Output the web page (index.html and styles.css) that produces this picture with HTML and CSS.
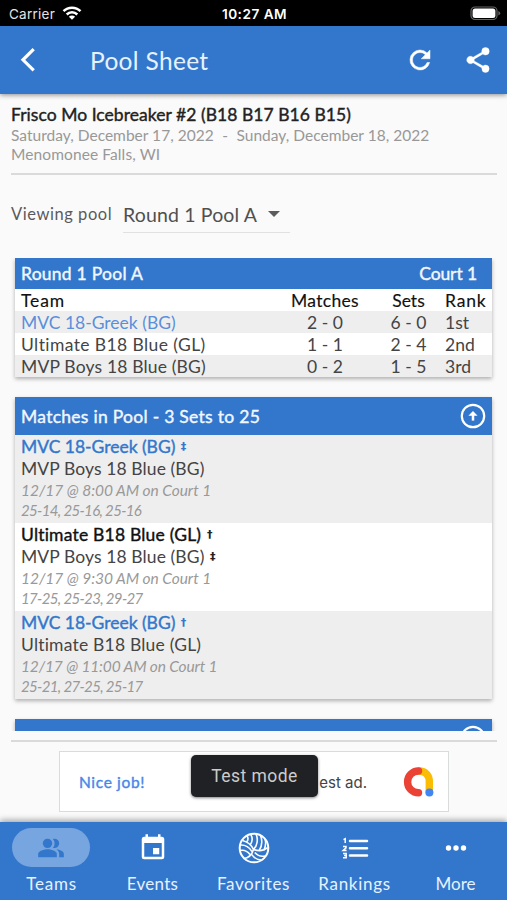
FILE: index.html
```html
<!DOCTYPE html>
<html lang="en">
<head>
<meta charset="utf-8">
<title>Pool Sheet</title>
<link rel="stylesheet" href="styles.css">
</head>
<body>
<div class="app">
  <div class="status">
    <div class="carrier"><span>Carrier</span>
      <svg width="20" height="15" viewBox="0 0 20 15" fill="none" stroke="#fff" stroke-width="2.5"><path d="M1.5 5.2a12 12 0 0 1 17 0M4.7 8.5a7.5 7.5 0 0 1 10.6 0"/><path d="M10 13.8 6.9 10.7a4.4 4.4 0 0 1 6.2 0z" fill="#fff" stroke="none"/></svg>
    </div>
    <div class="time">10:27 AM</div>
    <svg class="battery" width="31" height="15" viewBox="0 0 31 15"><rect x="1" y="1" width="26" height="12.5" rx="4" fill="none" stroke="#666" stroke-width="1.2"/><rect x="2.6" y="2.6" width="22.8" height="9.3" rx="2.5" fill="#fff"/><path d="M28.4 5v4.5q1.8-.8 1.8-2.2T28.4 5" fill="#666"/></svg>
  </div>
  <header class="bar">
    <svg class="back" width="16" height="24" viewBox="0 0 16 24" fill="none" stroke="#fff" stroke-width="3.2"><path d="M13.7 1.2 3 11.8l10.7 10.6"/></svg>
    <h1>Pool Sheet</h1>
    <svg class="reload" width="30" height="30" viewBox="0 0 24 24" fill="#fff" stroke="#fff" stroke-width=".4"><path d="M17.65 6.35A7.96 7.96 0 0 0 12 4a8 8 0 1 0 7.73 10h-2.08A6 6 0 1 1 12 6c1.66 0 3.14.69 4.22 1.78L13 11h7V4z"/></svg>
    <svg class="share" width="30" height="30" viewBox="0 0 24 24" fill="#fff" stroke="#fff" stroke-width=".3"><path d="M18 16.08c-.76 0-1.44.3-1.96.77L8.91 12.7c.05-.23.09-.46.09-.7s-.04-.47-.09-.7l7.05-4.11c.54.5 1.25.81 2.04.81a3 3 0 1 0-3-3c0 .24.04.47.09.7L8.04 9.81A3 3 0 1 0 6 15c.79 0 1.5-.31 2.04-.81l7.12 4.16c-.05.21-.08.43-.08.65a2.92 2.92 0 1 0 2.92-2.92z"/></svg>
  </header>
  <main>
    <section class="event">
      <h2>Frisco Mo Icebreaker #2 (B18 B17 B16 B15)</h2>
      <p class="dates"><span>Saturday, December 17, 2022</span><span>-</span><span>Sunday, December 18, 2022</span></p>
      <p class="place">Menomonee Falls, WI</p>
    </section>
    <div class="picker"><span class="picker-label">Viewing pool</span>
      <div class="select"><span>Round 1 Pool A</span><i class="caret"></i></div>
    </div>
    <div class="list">
      <section class="card">
        <div class="card-head pool"><span>Round 1 Pool A</span><span class="court">Court 1</span></div>
        <div class="row head"><span class="team">Team</span><span class="matches">Matches</span><span>Sets</span><span class="rank">Rank</span></div>
        <div class="row odd"><span class="link team1">MVC 18-Greek (BG)</span><span>2 - 0</span><span>6 - 0</span><span>1st</span></div>
        <div class="row"><span class="team2">Ultimate B18 Blue (GL)</span><span>1 - 1</span><span>2 - 4</span><span>2nd</span></div>
        <div class="row odd"><span class="team3">MVP Boys 18 Blue (BG)</span><span>0 - 2</span><span>1 - 5</span><span>3rd</span></div>
      </section>
      <section class="card">
        <div class="card-head games"><span>Matches in Pool - 3 Sets to 25</span>
          <svg width="26" height="26" viewBox="0 0 26 26" fill="none" stroke="#fff" stroke-width="2.2"><circle cx="13" cy="13" r="11.2"/><path d="M13 17.6V10" stroke-width="2.5"/><path d="M8.4 12.8 13 8l4.6 4.8z" fill="#fff" stroke="none"/></svg>
        </div>
        <div class="match odd">
          <p class="win link team1">MVC 18-Greek (BG) <b>‡</b></p>
          <p class="team3">MVP Boys 18 Blue (BG)</p>
          <p class="info">12/17 @ 8:00 AM on Court 1</p>
          <p class="info score">25-14, 25-16, 25-16</p>
        </div>
        <div class="match">
          <p class="win team2">Ultimate B18 Blue (GL) <b>†</b></p>
          <p class="team3">MVP Boys 18 Blue (BG) <b>‡</b></p>
          <p class="info">12/17 @ 9:30 AM on Court 1</p>
          <p class="info score">17-25, 25-23, 29-27</p>
        </div>
        <div class="match odd">
          <p class="win link team1">MVC 18-Greek (BG) <b>†</b></p>
          <p class="team2">Ultimate B18 Blue (GL)</p>
          <p class="info late">12/17 @ 11:00 AM on Court 1</p>
          <p class="info score">25-21, 27-25, 25-17</p>
        </div>
      </section>
      <section class="card next">
        <div class="card-head games"><span></span>
          <svg width="26" height="26" viewBox="0 0 26 26" fill="none" stroke="#fff" stroke-width="2.2"><circle cx="13" cy="13" r="11.2"/></svg>
        </div>
      </section>
    </div>
  </main>
  <aside class="ad-area">
    <div class="ad">
      <span class="nice">Nice job!</span><span class="ad-text">est ad.</span>
      <svg width="32" height="32" viewBox="0 0 32 32" fill="none" stroke-linecap="round" stroke-width="7.4"><path d="M16 5c6.5 0 10.3 4.6 10.3 10.5V26" stroke="#fbbc04"/><path d="M15.5 5a10.8 10.8 0 1 0 0 21.8" stroke="#ea4335"/><circle cx="26.4" cy="26.6" r="4" fill="#4285f4"/></svg>
      <div class="test">Test mode</div>
    </div>
  </aside>
  <nav>
    <div class="tab"><div class="icon active"><svg width="28" height="28" viewBox="0 0 24 24" fill="#3377cc"><path d="M16.67 13.13C18.04 14.06 19 15.32 19 17v3h4v-3c0-2.18-3.57-3.47-6.33-3.87zM15 12a4 4 0 0 0 0-8c-.47 0-.91.1-1.33.24a5.98 5.98 0 0 1 0 7.52c.42.14.86.24 1.33.24z"/><circle cx="9" cy="8" r="4"/><path d="M9 13c-2.67 0-8 1.34-8 4v3h16v-3c0-2.66-5.33-4-8-4z"/></svg></div><span class="t-teams">Teams</span></div>
    <div class="tab"><div class="icon"><svg width="30" height="30" viewBox="0 0 24 24" fill="#fff"><path d="M17 12h-5v5h5v-5zM16 1v2H8V1H6v2H5a2 2 0 0 0-2 2v14a2 2 0 0 0 2 2h14a2 2 0 0 0 2-2V5a2 2 0 0 0-2-2h-1V1h-2zm3 18H5V8h14v11z"/></svg></div><span class="t-events">Events</span></div>
    <div class="tab"><div class="icon"><svg width="32" height="32" viewBox="0 0 32 32" fill="none" stroke="#fff" stroke-width="1.6"><circle cx="16" cy="16" r="14.3" stroke-width="2"/><path d="M15.5 17.5C13.5 13 9.5 9.8 4.5 8.5M15.5 17.5C19.5 13.5 20.3 7 18 2M15.5 17.5C21 19.5 26 18.8 29.7 15.5"/><path d="M12.3 12.8C14.6 9.5 14.6 5.5 12.6 2.2M8.6 10C10.3 8 10.5 6 9 3.8M2 13C7 12.6 11 14.8 13.8 19.3M2 18.5C6 17.7 9.8 19.6 12 22.5M22.5 3.5C24.7 9 23.8 14.5 21 18.9M27 7C28.3 11 27.5 15 25.8 18.5M15.5 17.5C14 22.5 10.3 26.2 5.5 26.5M16.8 20.5C20 24 24 25 27.8 23.7M13.8 22.6C16.5 26.3 19.5 28 23.5 28"/></svg></div><span class="t-fav">Favorites</span></div>
    <div class="tab"><div class="icon"><svg width="28" height="28" viewBox="0 0 28 28" fill="none" stroke="#fff"><path d="M9 7h17M9 14.3h17M9 21.6h17" stroke-width="2.5" stroke-linecap="round"/><path d="M2.5 5.6 4.2 4.8v4.2M2 12.4h3v1.4L2.2 16.4H5.6M2 19.4h3.2v4.4H2M3 21.6h2" stroke-width="1.5"/></svg></div><span class="t-rank">Rankings</span></div>
    <div class="tab"><div class="icon"><svg width="22" height="8" viewBox="0 0 22 8" fill="#fff"><circle cx="3.5" cy="4" r="2.7"/><circle cx="11" cy="4" r="2.7"/><circle cx="18.5" cy="4" r="2.7"/></svg></div><span class="t-more">More</span></div>
  </nav>
</div>
</body>
</html>
```
FILE: styles.css
```css
* { box-sizing: border-box; }
body { margin: 0; background: #fafafa; color: #444; font-family: Lato, "Liberation Sans", sans-serif; font-size: 17.5px; }
h1, h2, p { margin: 0; font-weight: 400; }
svg { display: block; flex: none; }
.app { width: 507px; height: 900px; display: flex; flex-direction: column; overflow: hidden; }

.status { height: 26px; flex: none; background: #000; color: #fff; display: grid; grid-template-columns: 1fr auto 1fr; align-items: center; padding: 2px 6px 0 9px; font-family: Inter, sans-serif; font-size: 13.5px; }
.carrier { display: flex; align-items: center; gap: 7px; color: #e4e4e4; letter-spacing: .25px; }
.carrier svg { margin-top: -1px; }
.time { font-size: 13.6px; font-weight: 600; letter-spacing: .5px; margin-left: -1px; }
.battery { justify-self: end; margin-top: -2px; }

.bar { height: 68px; flex: none; background: #3377cc; color: #e6f2ff; display: flex; align-items: center; padding: 0 14px 0 20px; position: relative; box-shadow: 0 1px 5px rgba(0,0,0,.45); }
.bar h1 { font-size: 24.5px; letter-spacing: .32px; margin-left: 54px; flex: 1; line-height: 30px; padding-top: 1px; }
.share { margin-left: 28px; }

main { flex: 1; min-height: 0; padding: 0 11px; display: flex; flex-direction: column; }
.event { flex: none; height: 81px; margin-right: -1px; padding-top: 11px; border-bottom: 2px solid #dadada; color: #989898; font-size: 15.5px; line-height: 19.5px; }
.event h2 { font-size: 17.5px; line-height: 20px; color: #222; letter-spacing: .04px; -webkit-text-stroke: .4px #222; }
.dates { display: flex; gap: 8.5px; letter-spacing: .02px; padding-top: .5px; }
.place { letter-spacing: .1px; }
.picker { flex: none; height: 83px; padding-top: 20px; display: flex; align-items: flex-start; }
.picker-label { width: 112px; font-size: 16.5px; letter-spacing: .55px; line-height: 38px; color: #5a5a5a; }
.select { width: 167px; height: 38px; border-bottom: 1px solid #e1e1e1; display: flex; align-items: center; gap: 11px; font-size: 19.5px; letter-spacing: .15px; color: #505050; }
.select span { white-space: nowrap; padding-top: 1px; }
.caret { border: 6px solid transparent; border-top-color: #5c5c5c; border-bottom: 0; }

.list { flex: 1; min-height: 0; overflow: hidden; padding: 0 4px; margin: 0 -1px 0 0; }
.card { width: 477px; background: #fff; box-shadow: 0 2px 4px rgba(0,0,0,.3); margin-bottom: 20px; }
.card-head { background: #3377cc; color: #f1f7ff; display: flex; align-items: center; justify-content: space-between; padding: 0 6px; -webkit-text-stroke: .4px #f1f7ff; letter-spacing: .25px; }
.pool { height: 31px; padding-right: 15px; }
.court { letter-spacing: -.1px; }
.games { height: 38px; letter-spacing: .28px; }
.row { height: 22px; line-height: 23px; padding-left: 6px; display: grid; grid-template-columns: 262px 84px 83px 48px; }
.row > :nth-child(2), .row > :nth-child(3) { text-align: center; }
.row > :nth-child(4) { margin-left: -5px; }
.row.head { color: #111; -webkit-text-stroke: .15px #111; }
.team { letter-spacing: .9px; }
.matches { letter-spacing: .3px; }
.rank { letter-spacing: .8px; }
.odd { background: #eee; }
.link { color: #5a8fdb; }
.team2 { letter-spacing: .2px; }
.team3 { letter-spacing: .1px; }
.row .team2 { letter-spacing: .4px; }
.row .team3 { letter-spacing: .17px; }
.match { height: 88px; padding: 1px 6px 0; line-height: 22px; }
.match b { font: 700 11px/11px "DejaVu Sans", sans-serif; -webkit-text-stroke: 0; vertical-align: 3px; margin-left: 1px; color: #222; }
.match .link b { color: inherit; }
.win { color: #111; -webkit-text-stroke: .4px currentColor; }
.win.link { color: #3377cc; }
.win.team1 { letter-spacing: -.02px; }
.info { font-size: 15.5px; font-style: italic; line-height: 20px; color: #999; letter-spacing: -.05px; }
.late { letter-spacing: -.15px; }
.score { font-size: 15px; letter-spacing: -.65px; }

.ad-area { flex: none; height: 82px; margin: 9px 10px 0 11px; border-top: 2px solid #dadada; padding: 9px 48px 0; }
.ad { height: 61px; border: 1px solid #dadcdc; background: #fff; position: relative; display: flex; align-items: center; padding: 0 13px 0 19px; }
.nice { color: #4a86e8; font-size: 15.5px; letter-spacing: .65px; -webkit-text-stroke: .4px #4a86e8; }
.ad-text { margin-left: auto; margin-right: 36px; padding-top: 2px; font: 15px Inter, sans-serif; color: #444; }
.test { position: absolute; left: 131px; top: 3px; width: 127px; height: 42px; border-radius: 5px; background: #202124; color: #ccc; font: 17.5px/43px Roboto, sans-serif; letter-spacing: .45px; text-align: center; box-shadow: 0 1px 3px rgba(0,0,0,.5); }

nav { flex: none; height: 78px; background: #3377cc; color: #e6f2ff; display: grid; grid-template-columns: repeat(5, 101px); padding-left: 1px; font-size: 17px; box-shadow: 0 -2px 6px rgba(0,0,0,.35); position: relative; }
.tab { display: flex; flex-direction: column; align-items: center; padding-top: 6px; }
.icon { width: 78px; height: 39px; border-radius: 20px; display: flex; align-items: center; justify-content: center; }
.active { background: #77a5df; margin-left: -1px; }
.tab span { line-height: 22px; margin-top: 6px; }
.t-teams { letter-spacing: .8px; }
.t-events { letter-spacing: .3px; }
.t-fav { letter-spacing: .6px; }
.t-rank { letter-spacing: .7px; }
```
